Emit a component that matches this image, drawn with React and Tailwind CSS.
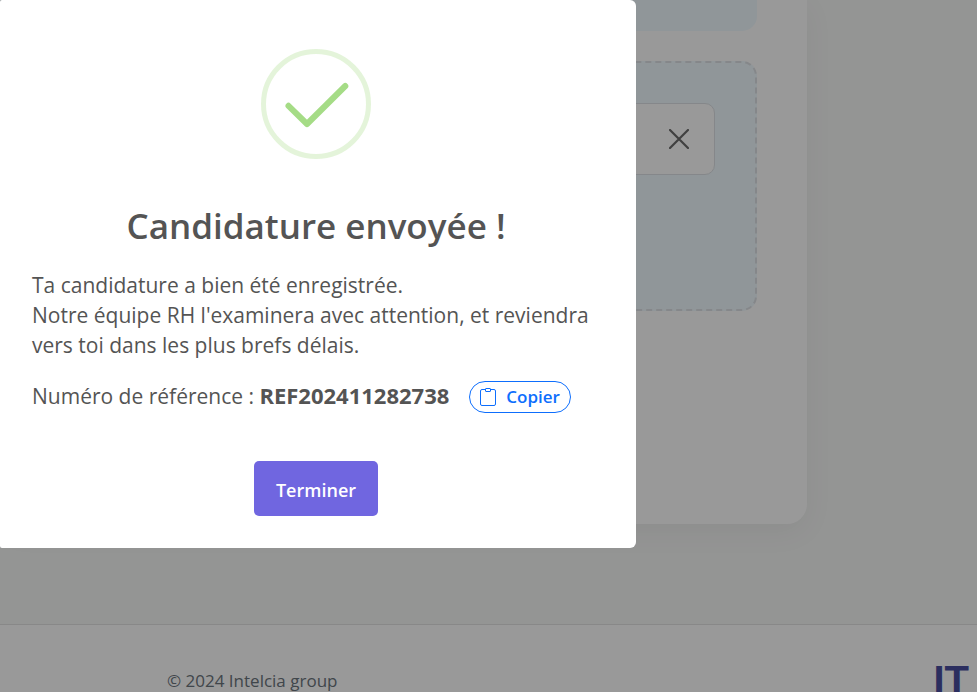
import { useState } from "react";

function SuccessIcon() {
  return (
    <svg className="mx-auto size-[110px]" viewBox="0 0 110 110" fill="none" aria-hidden="true">
      <circle cx="55" cy="55" r="52.5" stroke="#a5dc86" strokeOpacity="0.3" strokeWidth="5" />
      <path
        d="M27.5 56.8 L46 75 L84.3 37"
        stroke="#a5dc86"
        strokeWidth="6"
        strokeLinecap="round"
        strokeLinejoin="round"
      />
    </svg>
  );
}

function ClipboardIcon() {
  return (
    <svg className="h-[18px] w-4" viewBox="0 0 16 18" fill="none" stroke="currentColor" aria-hidden="true">
      <path d="M5 1.500H2A1.500 1.500 0 0 0 .5 3v13A1.500 1.500 0 0 0 2 17.500h12a1.500 1.500 0 0 0 1.500-1.500V3A1.500 1.500 0 0 0 14 1.500h-3" />
      <rect x="5.500" y="0.500" width="5" height="3" rx="0.500" />
    </svg>
  );
}

function CloseIcon() {
  return (
    <svg className="size-5" viewBox="0 0 20 20" fill="none" stroke="currentColor" aria-hidden="true">
      <path d="M1 1l18 18M19 1L1 19" strokeWidth="2.2" strokeLinecap="round" />
    </svg>
  );
}

function ApplicationForm() {
  return (
    <main className="flex-1 bg-[#f7f8f7] pr-[170px]">
      <section className="h-[524px] rounded-b-[20px] bg-white pr-[50px] shadow-[0_8px_30px_rgba(0,0,0,0.05)]">
        <div className="h-[31px] rounded-b-[15px] bg-[#f0faff]" />
        <div className="mt-[30px] h-[250px] rounded-[15px] border-2 border-dashed border-[#dee2e6] bg-[#f0faff] p-10">
          <div className="flex h-[72px] items-center justify-end rounded-[10px] border border-[#dee2e6] bg-white pr-[25px]">
            <button type="button" aria-label="Supprimer" className="text-[#6c6c6c]">
              <CloseIcon />
            </button>
          </div>
        </div>
      </section>
    </main>
  );
}

function Footer() {
  return (
    <footer className="flex h-[68px] items-start justify-between overflow-hidden border-t border-[#e3e3e3] bg-white pr-2 pl-[167px]">
      <p className="mt-11 text-[17px] leading-6 text-[#6c757d]">© 2024 Intelcia group</p>
      <span className="mt-8 font-['Liberation_Sans',Arial,sans-serif] text-[40px] leading-[46px] font-bold text-[#484e9f]">
        IT
      </span>
    </footer>
  );
}

function SuccessDialog({ onClose }) {
  return (
    <div className="fixed inset-0 bg-black/40">
      <div
        role="dialog"
        aria-modal="true"
        aria-labelledby="dialog-title"
        className="w-[636px] max-w-full rounded-l-xs rounded-r-md bg-white pt-[49px] pr-9 pb-8 pl-8 text-[#545454]"
      >
        <SuccessIcon />
        <h2 id="dialog-title" className="mt-[43px] text-center text-[35px] leading-[48px] font-semibold">
          Candidature envoyée !
        </h2>
        <p className="mt-5 text-[21px] leading-[30px]">
          Ta candidature a bien été enregistrée.
          <br />
          Notre équipe RH l'examinera avec attention, et reviendra vers toi dans les plus brefs délais.
        </p>
        <div className="mt-5 flex items-start gap-5 text-[21px] leading-[30px]">
          <p>
            Numéro de référence : <strong className="text-[22px] font-bold">REF202411282738</strong>
          </p>
          <button
            type="button"
            className="mt-px flex h-8 items-center gap-2.5 rounded-full border border-[#0d6efd] px-2.5 text-[17px] leading-6 font-semibold text-[#0d6efd]"
          >
            <ClipboardIcon />
            Copier
          </button>
        </div>
        <button
          type="button"
          onClick={onClose}
          className="mx-auto mt-12 block h-[55px] rounded-[5px] bg-[#7066e0] px-[22px] pt-1 text-[18px] font-semibold text-white"
        >
          Terminer
        </button>
      </div>
    </div>
  );
}

export default function App() {
  const [open, setOpen] = useState(true);
  return (
    <div className="flex h-screen flex-col overflow-hidden font-['Segoe_UI','Open_Sans','Noto_Sans',sans-serif]">
      <ApplicationForm />
      <Footer />
      {open && <SuccessDialog onClose={() => setOpen(false)} />}
    </div>
  );
}
